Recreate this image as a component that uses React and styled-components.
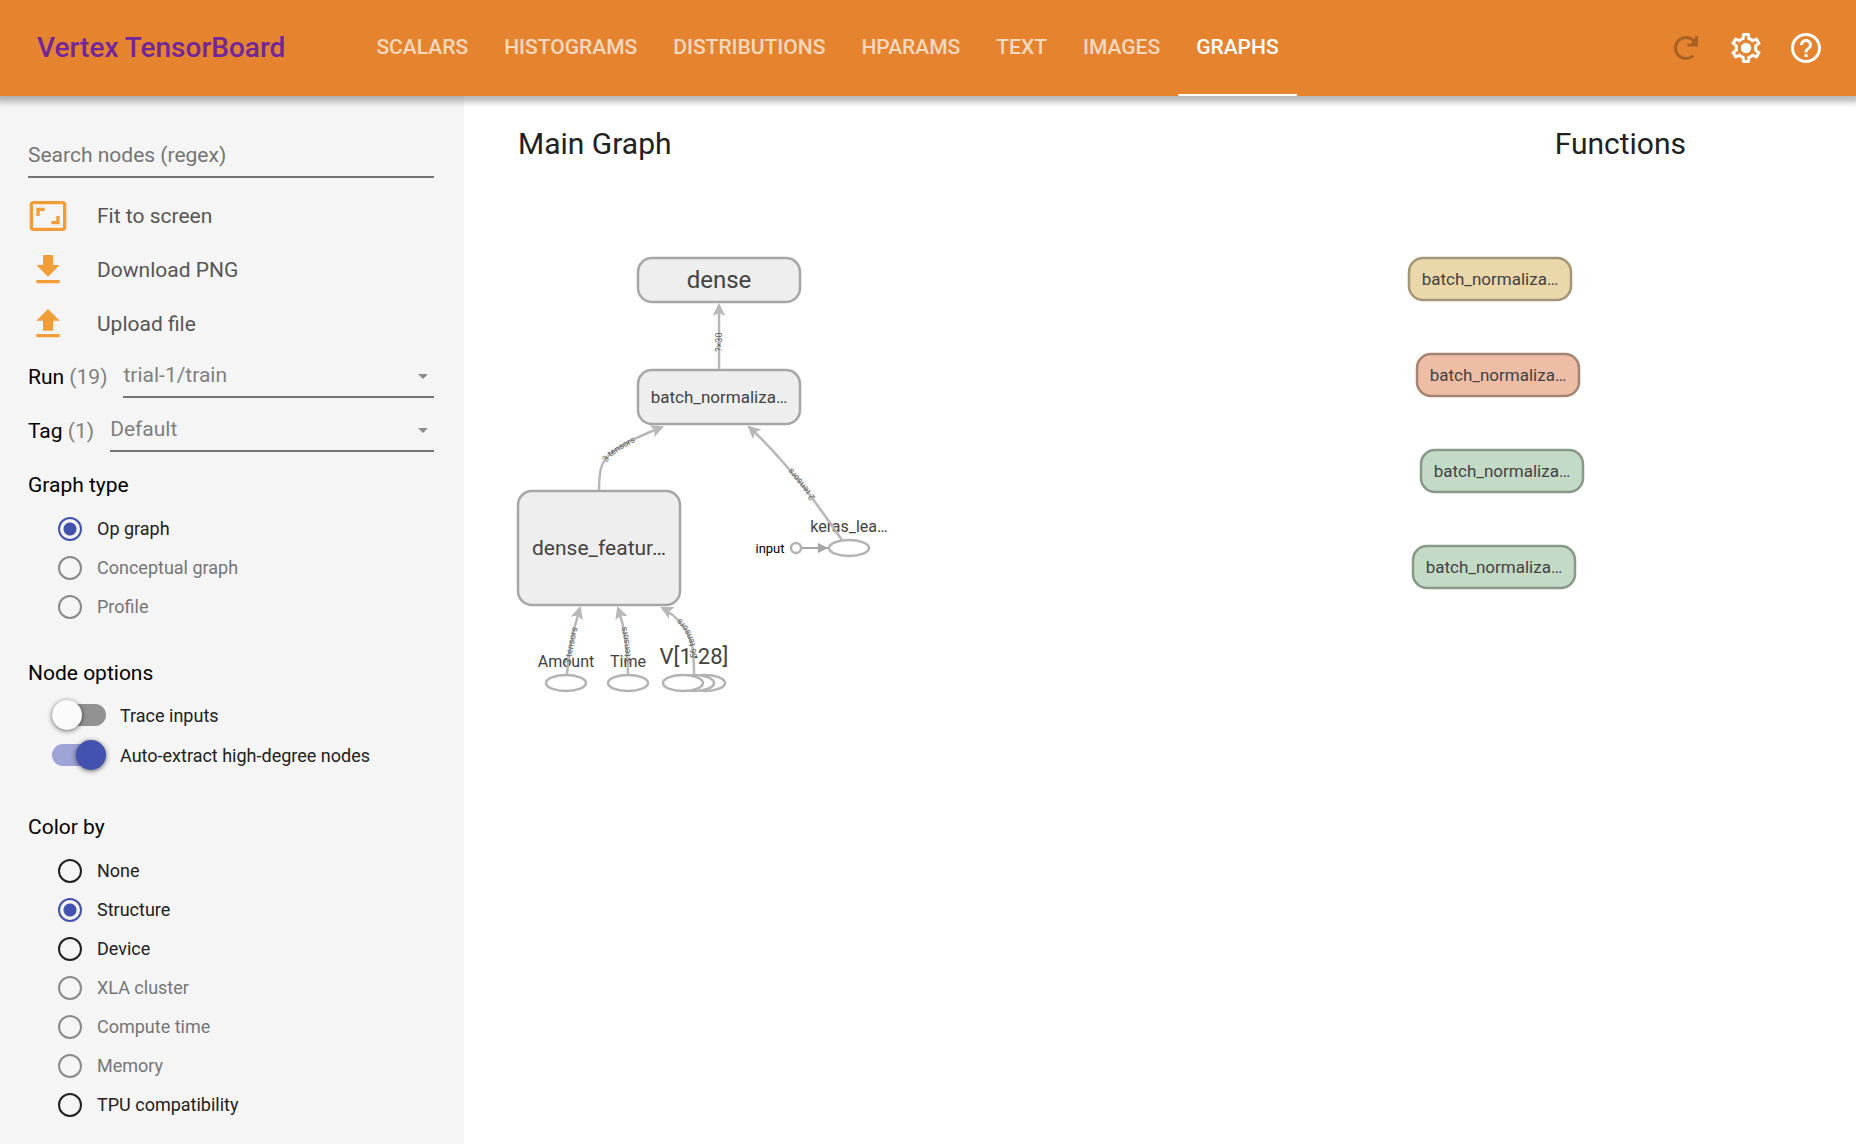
import React from "react";
import styled, { createGlobalStyle } from "styled-components";

const GlobalStyle = createGlobalStyle`
  *, *::before, *::after { box-sizing: border-box; }
  body { margin: 0; background: #fff; color: #212121; font-family: Roboto, "Noto Sans", sans-serif; }
  button, input, select { font-family: inherit; }
`;

const Page = styled.div`
  display: flex;
  flex-direction: column;
  min-height: 100vh;
`;

const Toolbar = styled.header`
  display: flex;
  align-items: center;
  height: 96px;
  padding: 0 32px 0 37px;
  background: #e5832f;
  box-shadow: 0 2px 6px 4px rgba(0, 0, 0, 0.28);
  z-index: 1;
`;

const Brand = styled.h1`
  margin: 0 73px 0 0;
  font-size: 28px;
  font-weight: 500;
  line-height: 36px;
  color: #722699;
  white-space: nowrap;
`;

const Tabs = styled.nav`
  display: flex;
  flex: 1;
  align-self: stretch;
`;

const Tab = styled.a`
  display: flex;
  align-items: center;
  padding: 0 18px;
  border-bottom: 2px solid ${(p) => (p.$active ? "#fff" : "transparent")};
  color: ${(p) => (p.$active ? "#fff" : "rgba(255, 255, 255, 0.7)")};
  font-size: 21px;
  font-weight: 500;
  text-decoration: none;
`;

const Actions = styled.div`
  display: flex;
  gap: 24px;
`;

const IconButton = styled.button`
  display: flex;
  padding: 0;
  border: 0;
  background: none;
  color: ${(p) => (p.disabled ? "rgba(0, 0, 0, 0.26)" : "#fff")};
`;

const Icon = styled.svg`
  display: block;
  flex: none;
  width: ${(p) => p.$size}px;
  height: ${(p) => p.$size}px;
  fill: currentColor;
`;

const Body = styled.div`
  display: flex;
  flex: 1;
`;

const Sidebar = styled.aside`
  width: 25%;
  padding: 30px 30px 12px 28px;
  background: #f5f5f5;
`;

const SearchInput = styled.input`
  display: block;
  width: 100%;
  height: 52px;
  margin-bottom: 11px;
  padding: 8px 0 0;
  border: 0;
  border-bottom: 2px solid #757575;
  background: transparent;
  font-size: 21px;
  &::placeholder { color: #757575; opacity: 1; }
`;

const ActionButton = styled.button`
  display: flex;
  align-items: center;
  gap: 29px;
  width: 100%;
  height: 54px;
  padding: 0;
  border: 0;
  background: none;
  color: #565656;
  font-size: 21px;
  svg { color: #f29d38; }
`;

const Field = styled.div`
  display: flex;
  align-items: center;
  gap: 16px;
  height: 54px;
  padding-bottom: 2px;
`;

const FieldLabel = styled.label`
  color: #000;
  font-size: 21px;
  line-height: 24px;
  white-space: nowrap;
`;

const Count = styled.span`
  color: #808080;
`;

const SelectBox = styled.div`
  display: flex;
  flex: 1;
  align-items: center;
  align-self: flex-start;
  height: 47px;
  padding: 2px 6px 0 0;
  border-bottom: 2px solid #757575;
`;

const Select = styled.select`
  flex: 1;
  min-width: 0;
  padding: 0;
  border: 0;
  appearance: none;
  background: transparent;
  color: #808080;
  font-size: 21px;
`;

const Caret = styled.span`
  margin-top: 4px;
  border: 5px solid transparent;
  border-top-color: #8c8c8c;
  border-bottom: 0;
`;

const Group = styled.fieldset`
  margin: 0;
  padding: ${(p) => p.$top}px 0 0;
  border: 0;
`;

const GroupTitle = styled.legend`
  float: left;
  width: 100%;
  margin-bottom: ${(p) => p.$gap || 12}px;
  padding: 0;
  color: #000;
  font-size: 21px;
  line-height: 24px;
`;

const Option = styled.label`
  clear: both;
  display: flex;
  align-items: center;
  gap: 15px;
  height: 39px;
  padding-left: 30px;
  color: ${(p) => (p.$disabled ? "#757575" : "#212121")};
  font-size: 18px;
`;

const Radio = styled.input`
  width: 24px;
  height: 24px;
  margin: 0;
  appearance: none;
  border: 2px solid #212121;
  border-radius: 50%;
  &:disabled { border-color: #8a8a8a; }
  &:checked {
    border-color: #4351af;
    background: radial-gradient(circle, #4351af 6px, transparent 7px);
  }
`;

const ToggleRow = styled(Option)`
  gap: 14px;
  height: 40px;
  padding-left: 24px;
`;

const Toggle = styled.input`
  display: flex;
  align-items: center;
  width: 54px;
  height: 22px;
  margin: 0;
  appearance: none;
  border-radius: 11px;
  background: #929292;
  &::before {
    content: "";
    flex: none;
    width: 30px;
    height: 30px;
    border-radius: 50%;
    background: #fafafa;
    box-shadow: 0 1px 5px rgba(0, 0, 0, 0.6);
  }
  &:checked { justify-content: flex-end; background: #9ea4d5; }
  &:checked::before { background: #4351af; }
`;

const Stage = styled.main`
  display: flex;
  flex: 1;
  justify-content: space-between;
  padding: 24px 170px 0 54px;
`;

const Panel = styled.section`
  display: flex;
  flex-direction: column;
  align-items: ${(p) => p.$align};
`;

const PanelTitle = styled.h2`
  margin: 0 0 88px;
  font-size: 30px;
  font-weight: 400;
  line-height: 48px;
`;

const Drawing = styled.svg`
  display: block;
  overflow: visible;
  fill: none;
`;

const NodeShape = styled.rect`
  fill: ${(p) => p.$fill};
  stroke: ${(p) => p.$stroke};
  stroke-width: 2.5px;
`;

const NodeLabel = styled.text`
  fill: ${(p) => p.$color || "#424242"};
  font-size: ${(p) => p.$size}px;
  text-anchor: middle;
`;

const EdgeLine = styled.path`
  stroke: #b8b8b8;
  stroke-width: 2.5px;
`;

const EdgeLabel = styled.text`
  fill: #616161;
  font-size: 9px;
  text-anchor: middle;
`;

const functionNodes = [
  { x: 0, y: 2, fill: "#ead8ab", stroke: "#a39778" },
  { x: 8, y: 98, fill: "#eebda6", stroke: "#a68474" },
  { x: 12, y: 194, fill: "#c3dbc6", stroke: "#88998a" },
  { x: 4, y: 290, fill: "#c3dbc6", stroke: "#88998a" },
];

const edges = [
  { id: "batch-dense", d: "M201 113V49", label: "?×30", at: "42%" },
  { id: "features-batch", d: "M81 234C81 214 83 204 96 195C108 186 120 181 144 171", label: "3 tensors", at: "50%" },
  { id: "keras-batch", d: "M324 284C314 270 302 252 285 230C268 209 250 188 231 171", label: "2 tensors", at: "47%" },
  { id: "amount-features", d: "M49 418C50 400 54 378 62 352", label: "3 tensors", at: "43%" },
  { id: "time-features", d: "M110 418C110 396 108 376 100 352", label: "3 tensors", at: "43%" },
  { id: "v-features", d: "M176 418C176 396 175 384 166 371C159 362 152 356 144 352", label: "56 tensors", at: "47%" },
];

const tabs = ["SCALARS", "HISTOGRAMS", "DISTRIBUTIONS", "HPARAMS", "TEXT", "IMAGES", "GRAPHS"];

const paths = {
  refresh: "M17.65 6.35C16.2 4.9 14.21 4 12 4c-4.42 0-7.99 3.58-7.99 8s3.57 8 7.99 8c2.1 0 4-.8 5.45-2.1l-1.4-1.45A5.97 5.97 0 0 1 12 18c-3.31 0-6-2.69-6-6s2.69-6 6-6c1.66 0 3.14.69 4.22 1.78L15.2 9H13v2h7V4h-2v2z",
  settings: "M19.43 12.98c.04-.32.07-.64.07-.98 0-.34-.03-.66-.07-.98l2.11-1.65c.19-.15.24-.42.12-.64l-2-3.46a.5.5 0 0 0-.61-.22l-2.49 1c-.52-.4-1.08-.73-1.69-.98l-.38-2.65A.488.488 0 0 0 14 2h-4c-.25 0-.46.18-.49.42l-.38 2.65c-.61.25-1.17.59-1.69.98l-2.49-1a.566.566 0 0 0-.18-.03c-.17 0-.34.09-.43.25l-2 3.46c-.13.22-.07.49.12.64l2.11 1.65c-.04.32-.07.65-.07.98 0 .33.03.66.07.98l-2.11 1.65c-.19.15-.24.42-.12.64l2 3.46a.5.5 0 0 0 .61.22l2.49-1c.52.4 1.08.73 1.69.98l.38 2.65c.03.24.24.42.49.42h4c.25 0 .46-.18.49-.42l.38-2.65c.61-.25 1.17-.59 1.69-.98l2.49 1c.06.02.12.03.18.03.17 0 .34-.09.43-.25l2-3.46c.12-.22.07-.49-.12-.64l-2.11-1.65zm-1.98-1.71c.04.31.05.52.05.73 0 .21-.02.43-.05.73l-.14 1.13.89.7 1.08.84-.7 1.21-1.27-.51-1.04-.42-.9.68c-.43.32-.84.56-1.25.73l-1.06.43-.16 1.13-.2 1.35h-1.4l-.19-1.35-.16-1.13-1.06-.43c-.43-.18-.83-.41-1.23-.71l-.91-.7-1.06.43-1.27.51-.7-1.21 1.08-.84.89-.7-.14-1.13c-.03-.31-.05-.54-.05-.74s.02-.43.05-.73l.14-1.13-.89-.7-1.08-.84.7-1.21 1.27.51 1.04.42.9-.68c.43-.32.84-.56 1.25-.73l1.06-.43.16-1.13.2-1.35h1.39l.19 1.35.16 1.13 1.06.43c.43.18.83.41 1.23.71l.91.7 1.06-.43 1.27-.51.7 1.21-1.07.85-.89.7.14 1.13zM12 8.5a3.5 3.5 0 1 0 0 7 3.5 3.5 0 0 0 0-7z",
  help: "M11 18h2v-2h-2v2zm1-16C6.48 2 2 6.48 2 12s4.48 10 10 10 10-4.48 10-10S17.52 2 12 2zm0 18c-4.41 0-8-3.59-8-8s3.59-8 8-8 8 3.59 8 8-3.59 8-8 8zm0-14c-2.21 0-4 1.79-4 4h2c0-1.1.9-2 2-2s2 .9 2 2c0 2-3 1.75-3 5h2c0-2.25 3-2.5 3-5 0-2.21-1.79-4-4-4z",
  fit: "M19 12h-2v3h-3v2h5v-5zM7 9h3V7H5v5h2V9zm14-6H3c-1.1 0-2 .9-2 2v14c0 1.1.9 2 2 2h18c1.1 0 2-.9 2-2V5c0-1.1-.9-2-2-2zm0 16.01H3V4.99h18v14.02z",
  download: "M19 9h-4V3H9v6H5l7 7 7-7zM5 18v2h14v-2H5z",
  upload: "M9 16h6v-6h4l-7-7-7 7h4zm-4 2h14v2H5z",
};

function Glyph({ name, size }) {
  return (
    <Icon $size={size} viewBox="0 0 24 24" aria-hidden="true">
      <path d={paths[name]} />
    </Icon>
  );
}

function RadioOption({ group, label, checked, disabled }) {
  return (
    <Option $disabled={disabled}>
      <Radio type="radio" name={group} defaultChecked={checked} disabled={disabled} />
      {label}
    </Option>
  );
}

function SelectField({ id, label, count, value }) {
  return (
    <Field>
      <FieldLabel htmlFor={id}>
        {label} <Count>({count})</Count>
      </FieldLabel>
      <SelectBox>
        <Select id={id} defaultValue={value}>
          <option>{value}</option>
        </Select>
        <Caret />
      </SelectBox>
    </Field>
  );
}

function MetaNode({ x, y, width = 162, height, label, size, fill = "#eeeeee", stroke = "#a6a6a6" }) {
  return (
    <g>
      <NodeShape x={x} y={y} width={width} height={height} rx="14" $fill={fill} $stroke={stroke} />
      <NodeLabel x={x + width / 2} y={y + height / 2} dy="0.35em" $size={size}>
        {label}
      </NodeLabel>
    </g>
  );
}

function OpNode({ x, y }) {
  return <ellipse cx={x} cy={y} rx="20" ry="8" fill="#fff" stroke="#b3b3b3" strokeWidth="2.5" />;
}

/* Graph coordinates start at the top left corner of the graph's bounding box. */
function MainGraph() {
  return (
    <Drawing width="370" height="438" viewBox="0 0 370 438" role="img" aria-label="Main graph">
      <defs>
        <marker id="arrow" viewBox="0 0 13 13" refX="11" refY="6.5" markerWidth="13" markerHeight="13" markerUnits="userSpaceOnUse" orient="auto">
          <path d="M0 0L13 6.5L0 13L3 6.5Z" fill="#b8b8b8" />
        </marker>
        <marker id="input-arrow" viewBox="0 0 10 10" refX="10" refY="5" markerWidth="10" markerHeight="10" markerUnits="userSpaceOnUse" orient="auto">
          <path d="M0 0L10 5L0 10Z" fill="#a6a6a6" />
        </marker>
      </defs>

      <MetaNode x={120} y={2} height={44} label="dense" size={24} />
      <MetaNode x={120} y={114} height={54} label="batch_normaliza…" size={17} />
      <MetaNode x={0} y={235} height={114} label="dense_featur…" size={21} />

      <OpNode x={331} y={292} />
      <OpNode x={48} y={427} />
      <OpNode x={110} y={427} />
      <OpNode x={187} y={427} />
      <OpNode x={176} y={427} />
      <OpNode x={165} y={427} />

      <circle cx="278" cy="292" r="5" stroke="#b3b3b3" strokeWidth="2.5" />
      <path d="M284 292H310" stroke="#a6a6a6" strokeWidth="2" markerEnd="url(#input-arrow)" />

      <NodeLabel x="331" y="276" $size={16}>keras_lea…</NodeLabel>
      <NodeLabel x="252" y="297" $size={13} $color="#000">input</NodeLabel>
      <NodeLabel x="48" y="411" $size={16}>Amount</NodeLabel>
      <NodeLabel x="110" y="411" $size={16}>Time</NodeLabel>
      <NodeLabel x="176" y="408" $size={22}>V[1-28]</NodeLabel>

      {edges.map((e) => (
        <g key={e.id}>
          <EdgeLine id={e.id} d={e.d} markerEnd="url(#arrow)" />
          <EdgeLabel dy="3">
            <textPath href={`#${e.id}`} startOffset={e.at}>{e.label}</textPath>
          </EdgeLabel>
        </g>
      ))}
    </Drawing>
  );
}

export default function App() {
  return (
    <Page>
      <GlobalStyle />
      <Toolbar>
        <Brand>Vertex TensorBoard</Brand>
        <Tabs>
          {tabs.map((name) => (
            <Tab key={name} href={`#${name.toLowerCase()}`} $active={name === "GRAPHS"}>
              {name}
            </Tab>
          ))}
        </Tabs>
        <Actions>
          <IconButton aria-label="Reload" disabled><Glyph name="refresh" size={36} /></IconButton>
          <IconButton aria-label="Settings"><Glyph name="settings" size={36} /></IconButton>
          <IconButton aria-label="Help"><Glyph name="help" size={36} /></IconButton>
        </Actions>
      </Toolbar>
      <Body>
        <Sidebar>
          <SearchInput type="text" aria-label="Search nodes (regex)" placeholder="Search nodes (regex)" />
          <ActionButton><Glyph name="fit" size={40} />Fit to screen</ActionButton>
          <ActionButton><Glyph name="download" size={40} />Download PNG</ActionButton>
          <ActionButton><Glyph name="upload" size={40} />Upload file</ActionButton>
          <SelectField id="run" label="Run" count={19} value="trial-1/train" />
          <SelectField id="tag" label="Tag" count={1} value="Default" />
          <Group $top={14}>
            <GroupTitle>Graph type</GroupTitle>
            <RadioOption group="type" label="Op graph" checked />
            <RadioOption group="type" label="Conceptual graph" disabled />
            <RadioOption group="type" label="Profile" disabled />
          </Group>
          <Group $top={35}>
            <GroupTitle $gap={10}>Node options</GroupTitle>
            <ToggleRow><Toggle type="checkbox" role="switch" />Trace inputs</ToggleRow>
            <ToggleRow><Toggle type="checkbox" role="switch" defaultChecked />Auto-extract high-degree nodes</ToggleRow>
          </Group>
          <Group $top={40}>
            <GroupTitle>Color by</GroupTitle>
            <RadioOption group="color" label="None" />
            <RadioOption group="color" label="Structure" checked />
            <RadioOption group="color" label="Device" />
            <RadioOption group="color" label="XLA cluster" disabled />
            <RadioOption group="color" label="Compute time" disabled />
            <RadioOption group="color" label="Memory" disabled />
            <RadioOption group="color" label="TPU compatibility" />
          </Group>
        </Sidebar>
        <Stage>
          <Panel $align="flex-start">
            <PanelTitle>Main Graph</PanelTitle>
            <MainGraph />
          </Panel>
          <Panel $align="flex-end">
            <PanelTitle>Functions</PanelTitle>
            <Drawing width="277" height="336" viewBox="0 0 277 336" role="img" aria-label="Functions">
              {functionNodes.map((n) => (
                <MetaNode key={n.y} x={n.x} y={n.y} height={42} label="batch_normaliza…" size={17} fill={n.fill} stroke={n.stroke} />
              ))}
            </Drawing>
          </Panel>
        </Stage>
      </Body>
    </Page>
  );
}
